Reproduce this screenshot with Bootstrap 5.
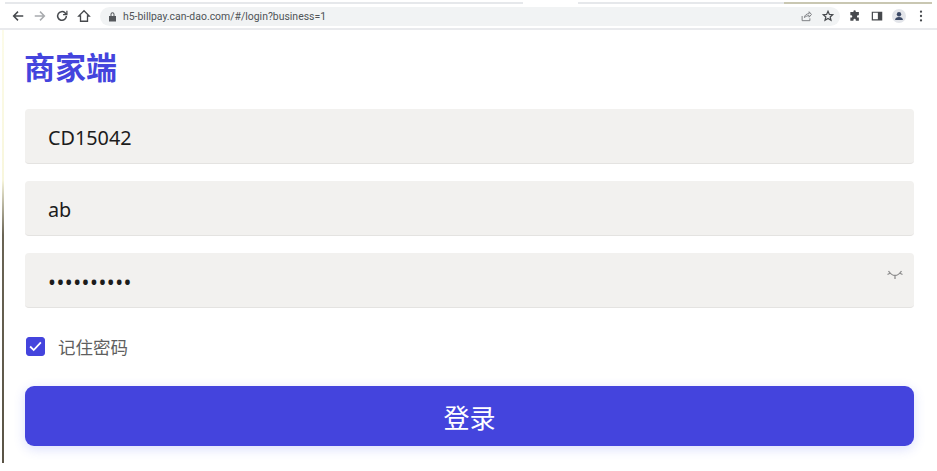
<!DOCTYPE html>
<html lang="zh">
<head>
<title>商家端</title>
<meta charset="UTF-8">
<link rel="stylesheet" href="https://cdn.jsdelivr.net/npm/bootstrap@5.3.2/dist/css/bootstrap.min.css">
<style>
    html, body { height: 471px; overflow: hidden; background: #fff; }
    .topstrip { height: 4px; padding: 2px 5px 0; }
    .strip-a { width: 518px; background: #e6e8eb; }
    .strip-gap { width: 55px; }
    .strip-b { width: 206px; background: #e6e8eb; }
    .strip-c { width: 148px; background: #c9c7b2; }
    .toolbar { height: 26px; padding-left: 11px; padding-right: 9px; border-bottom: 2px solid #e9eaed; background: #fff; }
    .tb-ico { width: 14px; height: 14px; flex: none; }
    .addr { height: 19px; margin-left: 1px; border-radius: 10px; background: #f1f3f4; padding: 0 5px 0 8px; }
    .addr-url { font: 10.45px "Roboto", "Liberation Sans", sans-serif; color: #4f5357; margin-left: 6px; white-space: nowrap; }
    .edge-line { position: absolute; left: 2px; top: 30px; width: 2px; height: 433px; background: linear-gradient(#fcfbe8 0, #f8f6dc 150px, #6a6454 205px, #5a5446 100%); }
    .page-wrap { padding: 0 23px 0 25px; }
    .brand-title { font: 700 31px/1 "Noto Sans CJK SC", sans-serif; color: #4444dd; margin: 20px 0 28px -1px; }
    .login-form { gap: 17px; }
    .login-input { height: 55px; background: #f2f1ef; border: 0; border-bottom: 1px solid #e4e3e1; border-radius: 4px; padding: 3px 23px 0; font: 19.800px "Noto Sans", "Noto Sans CJK SC", sans-serif; color: #1c1c1c; }
    .login-input:focus { background: #f2f1ef; box-shadow: none; }
    .pw-dots { font-size: 21px; letter-spacing: .5px; padding-top: 4px; }
    .eye-ico { position: absolute; right: 11px; top: 17px; width: 16px; height: 10px; }
    .remember { margin: 26px 0 0; gap: 13px; }
    .remember .form-check-input { width: 19px; height: 19px; margin: 0 0 0 1px; background-color: #4444dd; border-color: #4444dd; border-radius: 3px; background-image: url("data:image/svg+xml,%3csvg xmlns='http://www.w3.org/2000/svg' viewBox='0 0 19 19'%3e%3cpath fill='none' stroke='%23fff' stroke-width='2' d='M3.500 9.500l4 4 8-8.500'/%3e%3c/svg%3e"); }
    .remember label { font: 17.5px "Noto Sans CJK SC", sans-serif; color: #5f5f5f; }
    .login-btn { height: 60px; margin-top: 27px; background: #4444dd; border: 0; border-radius: 9px; color: #fff; font: 26px "Noto Sans CJK SC", sans-serif; box-shadow: 0 3px 12px rgba(68, 90, 240, .2); }
    .login-btn:hover { background: #4444dd; color: #fff; }
</style>
</head>
<body>
    <div class="topstrip d-flex">
        <div class="strip-a"></div><div class="strip-gap"></div><div class="strip-b"></div><div class="strip-c"></div>
    </div>
    <div class="toolbar d-flex align-items-center gap-2">
        <svg class="tb-ico" viewBox="0 0 16 16" fill="none" stroke="#46494d" stroke-width="1.7"><path d="M14 8H3M8 3 3 8l5 5"/></svg>
        <svg class="tb-ico" viewBox="0 0 16 16" fill="none" stroke="#a8abae" stroke-width="1.7"><path d="M2 8h11M8 3l5 5-5 5"/></svg>
        <svg class="tb-ico" viewBox="0 0 16 16" fill="none" stroke="#46494d" stroke-width="1.7"><path d="M13 8a5 5 0 1 1-1.500-3.600L13.500 6"/><path d="M13.600 2v4.400H9.200" stroke-width="1.400"/></svg>
        <svg class="tb-ico" viewBox="0 0 16 16" fill="none" stroke="#46494d" stroke-width="1.500"><path d="M8 2 2 8h2v6h8V8h2z"/></svg>
        <div class="addr d-flex align-items-center flex-grow-1">
            <svg width="9" height="11" viewBox="0 0 9 11" fill="#55585c"><path d="M1 5h7v5.500H1zM2.500 5V3.300a2 2 0 0 1 4 0V5h-1V3.300a1 1 0 0 0-2 0V5z"/></svg>
            <span class="addr-url">h5-billpay.can-dao.com/#/login?business=1</span>
            <svg class="tb-ico ms-auto me-2" viewBox="-1 -1 18 18" fill="none" stroke="#777a7e" stroke-width="1.200"><path d="M3 8v6h10v-3M6 10c0-3 3-5 6-5V2.500L15 6l-3 3.500V7.500c-2 0-4 .8-6 2.500z"/></svg>
            <svg class="tb-ico" viewBox="-1 -1 18 18" fill="none" stroke="#46494d" stroke-width="1.600"><path d="m8 2 1.800 4 4.200.4-3.200 2.800 1 4.300L8 11.200 4.200 13.500l1-4.300L2 6.400 6.200 6z"/></svg>
        </div>
        <svg class="tb-ico" viewBox="-1 -1 18 18" fill="#46494d"><path d="M6 2a1.500 1.500 0 0 1 3 0v1h4v4h-1a1.500 1.500 0 0 0 0 3h1v4H9v-1a1.500 1.500 0 0 0-3 0v1H2v-4h1a1.500 1.500 0 0 0 0-3H2V3h4z"/></svg>
        <svg class="tb-ico" viewBox="0 0 16 16" fill="#46494d"><path d="M2 3h12v10H2zm1.400 1.400v7.200H9V4.400z" fill-rule="evenodd"/></svg>
        <svg class="tb-ico" viewBox="0 0 16 16"><circle cx="8" cy="8" r="8" fill="#e3e5ea"/><circle cx="8" cy="6" r="2.500" fill="#3c4a66"/><path d="M3.500 12.500c0-2.500 2-3.500 4.500-3.500s4.500 1 4.500 3.500z" fill="#3c4a66"/></svg>
        <svg class="tb-ico" viewBox="0 0 16 16" fill="#46494d"><circle cx="8" cy="3" r="1.300"/><circle cx="8" cy="8" r="1.300"/><circle cx="8" cy="13" r="1.300"/></svg>
    </div>
    <div class="edge-line"></div>
    <div class="page-wrap">
        <h1 class="brand-title">商家端</h1>
        <form class="login-form d-flex flex-column">
            <div><input class="form-control login-input" type="text" value="CD15042"></div>
            <div><input class="form-control login-input" type="text" value="ab"></div>
            <div class="position-relative">
                <input class="form-control login-input pw-dots" type="password" value="1234567890">
                <svg class="eye-ico" viewBox="0 0 16 10" fill="none" stroke="#8e8e8e" stroke-width="1.300"><path d="M1.500 1c2 3 4 4.500 6.500 4.500s4.500-1.500 6.500-4.500M.5 4.500l3-1.500M15.500 4.500l-3-1.500M8 5.500V9"/></svg>
            </div>
        </form>
        <div class="remember form-check d-flex align-items-center p-0">
            <input class="form-check-input" type="checkbox" id="remember" checked>
            <label for="remember">记住密码</label>
        </div>
        <button class="btn login-btn w-100" type="button">登录</button>
    </div>
</body>
</html>
